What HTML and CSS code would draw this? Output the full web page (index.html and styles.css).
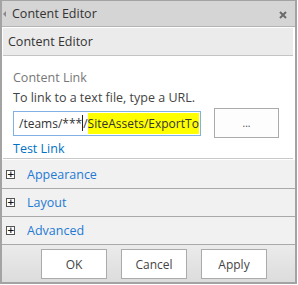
FILE: index.html
```html
<!DOCTYPE html>
<html lang="en">
<head>
    <meta charset="UTF-8">
    <title>Content Editor</title>
    <link rel="stylesheet" href="styles.css">
</head>
<body>
    <div class="panel">
        <div class="panel-header">
            <span class="back-arrow"></span>
            <span class="panel-title">Content Editor</span>
            <svg class="close-icon" width="8" height="8" viewBox="0 0 8 8">
                <path d="M1 1 L7 7 M7 1 L1 7" stroke="#6a6a6a" stroke-width="2"/>
            </svg>
        </div>

        <div class="section-title">Content Editor</div>

        <div class="section-body">
            <div class="field-label">Content Link</div>
            <div class="field-hint">To link to a text file, type a URL.</div>
            <div class="link-row">
                <div class="link-input">/teams/***<span class="caret"></span>/<span class="hl">SiteAssets/ExportTo</span></div>
                <button class="browse-btn">...</button>
            </div>
            <a class="test-link" href="#">Test Link</a>
        </div>

        <div class="group-list">
            <div class="group-row first"><span class="plus-box">+</span><span class="group-name">Appearance</span></div>
            <div class="group-row"><span class="plus-box">+</span><span class="group-name">Layout</span></div>
            <div class="group-row"><span class="plus-box">+</span><span class="group-name">Advanced</span></div>
        </div>

        <div class="panel-footer">
            <button class="footer-btn">OK</button>
            <button class="footer-btn">Cancel</button>
            <button class="footer-btn">Apply</button>
        </div>
    </div>
</body>
</html>
```

FILE: styles.css
```css
* {
    box-sizing: border-box;
}

body {
    font-family: 'Open Sans', 'Noto Sans', sans-serif;
    font-size: 12.5px;
    background-color: white;
    margin: 0;
    padding: 0;
}

.panel {
    width: 297px;
    height: 284px;
    border: 2px solid #a3a3a3;
    border-top: 1px solid #a3a3a3;
    display: flex;
    flex-direction: column;
    background-color: white;
}

.panel-header {
    height: 26px;
    background-color: #d5d5d5;
    border-bottom: 1px solid #b3b3b3;
    display: flex;
    align-items: center;
    padding-left: 1px;
    padding-right: 8px;
}

.back-arrow {
    width: 0;
    height: 0;
    border-top: 3px solid transparent;
    border-bottom: 3px solid transparent;
    border-right: 3px solid #8a8a8a;
    margin-right: 6px;
    margin-top: 1px;
}

.panel-title {
    color: #333;
    font-size: 12.5px;
    flex: 1;
}

.close-icon {
    display: block;
    margin-top: 2px;
}

.section-title {
    margin: 1px 2px 0 1px;
    height: 28px;
    background-color: #ebebeb;
    border-bottom: 1px solid #c4c4c4;
    color: #333;
    font-size: 12.5px;
    padding-left: 5px;
    line-height: 27px;
}

.section-body {
    padding: 12px 0 0 10px;
    height: 103px;
    border-bottom: 1px solid #c8c8c8;
    margin: 0 2px 0 1px;
}

.field-label {
    color: #777;
    line-height: 20px;
}

.field-hint {
    color: #444;
    line-height: 20px;
}

.link-row {
    display: flex;
    align-items: center;
    margin-top: 0;
}

.link-input {
    width: 188px;
    height: 25px;
    border: 1px solid #7fb0e6;
    padding: 0 0 0 5px;
    white-space: nowrap;
    overflow: hidden;
    color: #333;
    font-size: 12px;
    line-height: 23px;
}

.caret {
    display: inline-block;
    width: 1px;
    height: 16px;
    background-color: #222;
    vertical-align: -3px;
}

.hl {
    background-color: #ffff00;
    padding: 2px 0;
}

.browse-btn {
    margin-left: 13px;
    width: 65px;
    height: 30px;
    border: 1px solid #ababab;
    background-color: #fdfdfd;
    font-family: inherit;
    font-size: 10px;
    color: #444;
    padding: 0;
}

.test-link {
    display: block;
    color: #0072c6;
    text-decoration: none;
    line-height: 20px;
    margin-top: 1px;
}

.group-list {
    border-top: 1px solid white;
}

.group-row {
    height: 28px;
    background-color: #f1f1f1;
    border-bottom: 1px solid #a9a9a9;
    display: flex;
    align-items: center;
    padding-left: 4px;
}

.group-row.first {
    height: 29px;
}

.plus-box {
    width: 9px;
    height: 9px;
    border: 1px solid #555;
    background-color: white;
    font-size: 9px;
    line-height: 6px;
    text-align: center;
    font-family: 'DejaVu Sans', sans-serif;
    font-weight: bold;
    color: #111;
    margin-right: 12px;
}

.group-name {
    color: #1f7ad4;
    font-size: 12.5px;
}

.panel-footer {
    flex: 1;
    background: linear-gradient(#ebebeb, #dcdcdc);
    display: flex;
    align-items: flex-start;
    gap: 14px;
    padding: 4px 0 0 39px;
}

.footer-btn {
    width: 66px;
    height: 30px;
    border: 1px solid #ababab;
    background-color: white;
    font-family: inherit;
    font-size: 12px;
    color: #444;
    padding: 0;
}
```
